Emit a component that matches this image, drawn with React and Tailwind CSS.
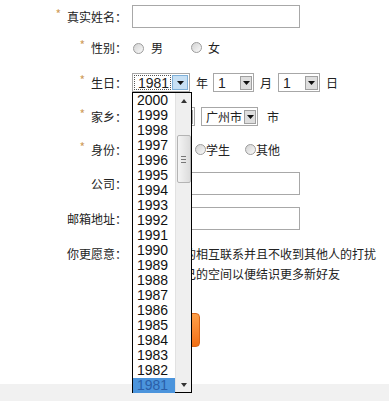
import React from 'react';

const YEARS = Array.from({ length: 20 }, (_, i) => 2000 - i);
const NUM = "font-['Liberation_Sans',Arial,sans-serif]";

function Star() {
  return <span className="text-[#cf9d5c] text-[12px] leading-none mr-[6px] relative top-[-3px]">*</span>;
}

function Label({ star, children }) {
  return (
    <div className="w-[127px] shrink-0 flex justify-end items-center">
      {star && <Star />}
      <span>{children}</span>
    </div>
  );
}

function Arrow({ small }) {
  return (
    <svg width={small ? 6 : 7} height={small ? 4 : 4} viewBox="0 0 7 4">
      <path d="M0 0h7L3.5 4z" fill="#111" />
    </svg>
  );
}

function Radio() {
  return (
    <span className="inline-block w-[11px] h-[11px] rounded-full border border-[#9c9c9c] bg-gradient-to-br from-[#d2d2d2] to-[#fafafa] shrink-0" />
  );
}

function Select({ w, value, btnW = 12 }) {
  return (
    <div className={`h-[19px] border border-[#a7a7a7] bg-white flex items-center pl-[4px] pr-[1px] shrink-0 ${w}`}>
      <span className="flex-1 leading-none">{value}</span>
      <span
        className="h-[14px] border border-[#a0a0a0] bg-[#dedede] flex items-center justify-center"
        style={{ width: btnW }}
      >
        <Arrow />
      </span>
    </div>
  );
}

function YearDropdown() {
  return (
    <div className="absolute left-0 top-[19px] w-[60px] h-[301px] border border-black bg-white flex z-10">
      <ul className={`flex-1 ${NUM} text-[14px] text-[#111]`}>
        {YEARS.map((y) => (
          <li
            key={y}
            className={`h-[15px] leading-[15px] pl-[4px] ${y === 1981 ? 'bg-[#4b94dc] text-[#2a5ea8]' : ''}`}
          >
            {y}
          </li>
        ))}
      </ul>
      <div className="w-[16px] bg-[#efefef] border-l border-[#e2e2e2] flex flex-col items-center">
        <div className="h-[15px] flex items-center justify-center">
          <svg width="6" height="4" viewBox="0 0 6 4"><path d="M0 4h6L3 0z" fill="#333" /></svg>
        </div>
        <div className="mt-[27px] w-[14px] h-[48px] rounded-[2px] border border-[#b4b4b4] bg-gradient-to-r from-[#f4f4f4] to-[#dcdcdc] flex flex-col items-center justify-center gap-[2px]">
          <span className="w-[5px] h-px bg-[#777]" />
          <span className="w-[5px] h-px bg-[#777]" />
          <span className="w-[5px] h-px bg-[#777]" />
        </div>
        <div className="flex-1" />
        <div className="h-[15px] flex items-center justify-center">
          <svg width="6" height="4" viewBox="0 0 6 4"><path d="M0 0h6L3 4z" fill="#333" /></svg>
        </div>
      </div>
    </div>
  );
}

export default function App() {
  return (
    <div className="w-[389px] h-[401px] bg-white overflow-hidden font-['Noto_Sans_CJK_SC',sans-serif] text-[12px] text-[#222] leading-none">
      <div className="h-[384px] pt-[5px]">
        {/* 真实姓名 */}
        <div className="flex h-[23px]">
          <Label star>真实姓名：</Label>
          <input className="ml-[5px] w-[168px] h-[23px] border border-[#a8a8a8] outline-none" />
        </div>

        {/* 性别 */}
        <div className="flex h-[20px] mt-[10px]">
          <Label star>性别：</Label>
          <div className="ml-[6px] flex items-center">
            <Radio />
            <span className="ml-[7px]">男</span>
            <span className="ml-[28px]"><Radio /></span>
            <span className="ml-[6px]">女</span>
          </div>
        </div>

        {/* 生日 */}
        <div className="flex h-[19px] mt-[15px]">
          <Label star>生日：</Label>
          <div className="ml-[5px] flex items-center">
            <div className="relative">
              <div className={`w-[58px] h-[19px] border border-[#a7a7a7] bg-white flex items-center p-[1px] ${NUM} text-[14px]`}>
                <span className="flex-1 h-full border border-dotted border-[#555] flex items-center pl-[3px] leading-none">1981</span>
                <span className="w-[16px] h-[15px] ml-[1px] border border-[#7fb0d8] bg-[#c7e0f4] flex items-center justify-center">
                  <Arrow />
                </span>
              </div>
              <YearDropdown />
            </div>
            <span className="ml-[6px]">年</span>
            <div className={`ml-[5px] ${NUM} text-[14px]`}>
              <Select w="w-[41px]" value="1" />
            </div>
            <span className="ml-[6px]">月</span>
            <div className={`ml-[6px] ${NUM} text-[14px]`}>
              <Select w="w-[42px]" value="1" btnW={13} />
            </div>
            <span className="ml-[6px]">日</span>
          </div>
        </div>

        {/* 家乡 */}
        <div className="flex h-[17px] mt-[16px]">
          <Label star>家乡：</Label>
          <div className="ml-[5px] flex items-center">
            <Select w="w-[63px]" value="广东省" />
            <div className="ml-[6px]">
              <Select w="w-[57px]" value="广州市" />
            </div>
            <span className="ml-[9px]">市</span>
          </div>
        </div>

        {/* 身份 */}
        <div className="flex h-[18px] mt-[16px]">
          <Label star>身份：</Label>
          <div className="ml-[5px] flex items-center">
            <Radio />
            <span>上班族</span>
            <span className="ml-[16px]"><Radio /></span>
            <span>学生</span>
            <span className="ml-[15px]"><Radio /></span>
            <span>其他</span>
          </div>
        </div>

        {/* 公司 */}
        <div className="flex h-[23px] mt-[13px]">
          <Label>公司：</Label>
          <input className="ml-[5px] w-[168px] h-[23px] border border-[#a8a8a8] outline-none" />
        </div>

        {/* 邮箱地址 */}
        <div className="flex h-[23px] mt-[12px]">
          <Label>邮箱地址：</Label>
          <input className="ml-[5px] w-[168px] h-[23px] border border-[#a8a8a8] outline-none" />
        </div>

        {/* 你更愿意 */}
        <div className="flex h-[20px] mt-[14px]">
          <Label>你更愿意：</Label>
          <div className="ml-[5px] flex items-center">
            <Radio />
            <span className="ml-[5px] whitespace-nowrap">与好友的相互联系并且不收到其他人的打扰</span>
          </div>
        </div>
        <div className="flex h-[20px]">
          <div className="w-[127px] shrink-0" />
          <div className="ml-[5px] flex items-center">
            <Radio />
            <span className="ml-[5px] whitespace-nowrap">展示自己的空间以便结识更多新好友</span>
          </div>
        </div>

        {/* 提交 */}
        <div className="flex mt-[29px]">
          <div className="w-[127px] shrink-0" />
          <button className="ml-[5px] w-[68px] h-[34px] rounded-[4px] border border-[#d9661a] bg-gradient-to-b from-[#ffa048] to-[#f26f12] text-white text-[14px]">
            注册
          </button>
        </div>
      </div>
      <div className="h-[17px] bg-[#f1f1f1]" />
    </div>
  );
}
